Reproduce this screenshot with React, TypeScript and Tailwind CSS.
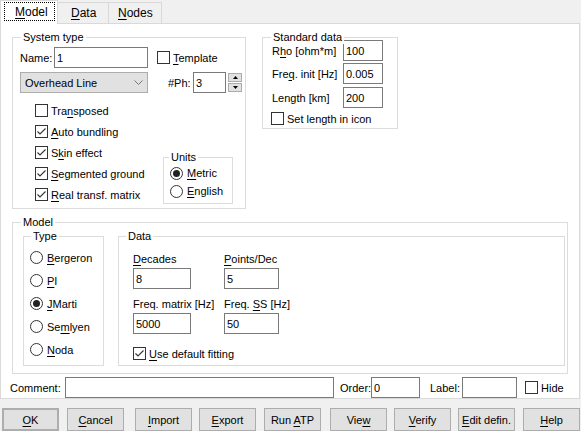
import React from "react";

type Kids = { children?: React.ReactNode; className?: string };

function U({ children }: Kids) {
  return <span className="underline decoration-1 underline-offset-[2px]">{children}</span>;
}

function Group({ title, className = "", titleLeft = "left-[8px]", children }: Kids & { title: string; titleLeft?: string }) {
  return (
    <div className={`relative border border-[#dcdcdc] ${className}`}>
      <span className={`absolute -top-[8px] ${titleLeft} bg-white px-[2px] leading-[14px] whitespace-nowrap`}>{title}</span>
      {children}
    </div>
  );
}

function Field({ value = "", className = "" }: { value?: string; className?: string }) {
  return (
    <div className={`h-[21px] border border-[#7a7a7a] bg-white pl-[2px] flex items-center ${className}`}>{value}</div>
  );
}

function Check({ checked, label, className = "" }: { checked?: boolean; label: React.ReactNode; className?: string }) {
  return (
    <div className={`flex items-center h-[21px] whitespace-nowrap ${className}`}>
      <span className="w-[13px] h-[13px] shrink-0 border border-[#333] bg-white flex items-center justify-center">
        {checked && (
          <svg width="11" height="11" viewBox="0 0 11 11">
            <path d="M1.5 5.5 L4 8 L9.5 2.5" fill="none" stroke="#333" strokeWidth="1.1" />
          </svg>
        )}
      </span>
      <span className="ml-[3px]">{label}</span>
    </div>
  );
}

function Radio({ checked, label, className = "" }: { checked?: boolean; label: React.ReactNode; className?: string }) {
  return (
    <div className={`flex items-center whitespace-nowrap ${className}`}>
      <span className="w-[13px] h-[13px] shrink-0 rounded-full border border-[#333] bg-white flex items-center justify-center">
        {checked && <span className="w-[7px] h-[7px] rounded-full bg-[#222]" />}
      </span>
      <span className="ml-[4px]">{label}</span>
    </div>
  );
}

function Btn({ children, className = "" }: Kids) {
  return (
    <div className={`h-[23px] w-[57px] shrink-0 flex items-center justify-center bg-[#e1e1e1] border border-[#adadad] ${className}`}>
      {children}
    </div>
  );
}

export default function App() {
  return (
    <div className="w-[581px] h-[431px] overflow-hidden bg-[#f0f0f0] text-[11px] leading-[14px] text-black [font-family:'Liberation_Sans',Arial,sans-serif]">
      {/* tabs */}
      <div className="flex items-end h-[23px]">
        <div className="relative z-10 -mb-px w-[58px] h-[24px] bg-white border border-b-0 border-[#d9d9d9] pl-[3px] pt-[1px]">
          <div className="h-[19px] w-[51px] border border-dotted border-black flex items-center pl-[10px] text-[12px]">
            <span><U>M</U>odel</span>
          </div>
        </div>
        <div className="w-[51px] h-[21px] border border-l-0 border-b-0 border-[#d9d9d9] flex items-center pl-[13px] text-[12px]">
          <span><U>D</U>ata</span>
        </div>
        <div className="w-[53px] h-[21px] border border-l-0 border-b-0 border-[#d9d9d9] flex items-center pl-[9px] text-[12px]">
          <span><U>N</U>odes</span>
        </div>
      </div>

      {/* tab page */}
      <div className="w-[580px] h-[376px] bg-white border border-[#d9d9d9]">
        <div className="flex items-start mt-[13px] ml-[11px]">
          <Group title="System type" className="w-[234px] h-[172px] pl-[7px] pt-[9px]">
            <div className="flex items-center h-[21px]">
              <span className="w-[34px]">Name:</span>
              <Field value="1" className="w-[94px]" />
              <Check label={<><U>T</U>emplate</>} className="ml-[9px]" />
            </div>
            <div className="flex items-center mt-[4px]">
              <div className="w-[128px] h-[21px] bg-[#e1e1e1] border border-[#adadad] flex items-center justify-between pl-[4px] pr-[4px]">
                <span>Overhead Line</span>
                <svg width="9" height="5" viewBox="0 0 9 5">
                  <path d="M0.5 0.5 L4.5 4.5 L8.5 0.5" fill="none" stroke="#777" strokeWidth="1" />
                </svg>
              </div>
              <span className="ml-[20px] w-[25px]">#Ph:</span>
              <Field value="3" className="w-[33px] h-[20px]" />
              <div className="ml-[2px] flex flex-col gap-[1px]">
                <div className="w-[14px] h-[9px] bg-[#e1e1e1] border border-[#adadad] flex items-center justify-center">
                  <svg width="5" height="3" viewBox="0 0 5 3"><path d="M0 3 L2.5 0 L5 3 Z" fill="#000" /></svg>
                </div>
                <div className="w-[14px] h-[9px] bg-[#e1e1e1] border border-[#adadad] flex items-center justify-center">
                  <svg width="5" height="3" viewBox="0 0 5 3"><path d="M0 0 L5 0 L2.5 3 Z" fill="#000" /></svg>
                </div>
              </div>
            </div>
            <div className="flex mt-[7px]">
              <div className="w-[143px] pl-[15px]">
                <Check label={<>Tra<U>n</U>sposed</>} />
                <Check checked label={<><U>A</U>uto bundling</>} />
                <Check checked label={<>S<U>k</U>in effect</>} />
                <Check checked label={<><U>S</U>egmented ground</>} />
                <Check checked label={<><U>R</U>eal transf. matrix</>} />
              </div>
              <Group title="Units" titleLeft="left-[5px]" className="mt-[57px] w-[70px] h-[47px] pl-[6px] pt-[6px]">
                <Radio checked label={<><U>M</U>etric</>} className="h-[18px]" />
                <Radio label={<><U>E</U>nglish</>} className="h-[18px]" />
              </Group>
            </div>
          </Group>

          <Group title="Standard data" className="ml-[16px] w-[136px] h-[92px] pl-[8px] pt-[2px]">
            <div className="flex items-center">
              <span className="w-[72px] pl-[1px]">R<U>h</U>o [ohm*m]</span>
              <Field value="100" className="w-[40px]" />
            </div>
            <div className="flex items-center mt-[2px]">
              <span className="w-[72px] pl-[1px]">Fre<U>q</U>. init [Hz]</span>
              <Field value="0.005" className="w-[40px]" />
            </div>
            <div className="flex items-center mt-[3px]">
              <span className="w-[72px] pl-[1px]">Length [km]</span>
              <Field value="200" className="w-[40px]" />
            </div>
            <Check label="Set length in icon" className="h-[20px]" />
          </Group>
        </div>

        <Group title="Model" className="mt-[13px] ml-[11px] w-[556px] h-[152px] pl-[10px] pt-[13px]">
          <div className="flex">
            <Group title="Type" titleLeft="left-[7px]" className="w-[81px] h-[130px] pl-[6px] pt-[9px]">
              <Radio label={<><U>B</U>ergeron</>} className="h-[23px]" />
              <Radio label={<><U>P</U>I</>} className="h-[23px]" />
              <Radio checked label={<><U>J</U>Marti</>} className="h-[23px]" />
              <Radio label={<>Se<U>m</U>lyen</>} className="h-[23px]" />
              <Radio label={<><U>N</U>oda</>} className="h-[23px]" />
            </Group>
            <Group title="Data" titleLeft="left-[7px]" className="ml-[14px] w-[447px] h-[130px] pl-[14px] pt-[15px]">
              <div className="flex">
                <div className="w-[91px]">
                  <div><U>D</U>ecades</div>
                  <Field value="8" className="w-[58px] mt-[2px]" />
                </div>
                <div>
                  <div><U>P</U>oints/Dec</div>
                  <Field value="5" className="w-[55px] mt-[2px]" />
                </div>
              </div>
              <div className="flex mt-[8px]">
                <div className="w-[91px]">
                  <div className="whitespace-nowrap">Freq. matrix [Hz]</div>
                  <Field value="5000" className="w-[58px] mt-[2px]" />
                </div>
                <div>
                  <div className="whitespace-nowrap">Freq. <U>S</U>S [Hz]</div>
                  <Field value="50" className="w-[55px] mt-[2px]" />
                </div>
              </div>
              <Check checked label={<><U>U</U>se default fitting</>} className="mt-[9px] h-[20px]" />
            </Group>
          </div>
        </Group>

        <div className="flex items-center h-[21px] mt-[3px] pl-[9px]">
          <span className="w-[55px]">Comment:</span>
          <Field className="w-[269px]" />
          <span className="ml-[6px] w-[31px] whitespace-nowrap">Order:</span>
          <Field value="0" className="w-[49px]" />
          <span className="ml-[10px] w-[32px]">Label:</span>
          <Field className="w-[55px]" />
          <Check label="Hide" className="ml-[8px]" />
        </div>
      </div>

      {/* buttons */}
      <div className="flex mt-[9px]">
        <Btn className="ml-[2px] border-2 border-[#0078d7]"><span><U>O</U>K</span></Btn>
        <Btn className="ml-[8px]"><span><U>C</U>ancel</span></Btn>
        <Btn className="ml-[11px]"><span><U>I</U>mport</span></Btn>
        <Btn className="ml-[7px]"><span><U>E</U>xport</span></Btn>
        <Btn className="ml-[8px]"><span>Run <U>A</U>TP</span></Btn>
        <Btn className="ml-[9px]"><span>Vie<U>w</U></span></Btn>
        <Btn className="ml-[7px]"><span><U>V</U>erify</span></Btn>
        <Btn className="ml-[7px]"><span><U>E</U>dit defin.</span></Btn>
        <Btn className="ml-[8px]"><span><U>H</U>elp</span></Btn>
      </div>
    </div>
  );
}
